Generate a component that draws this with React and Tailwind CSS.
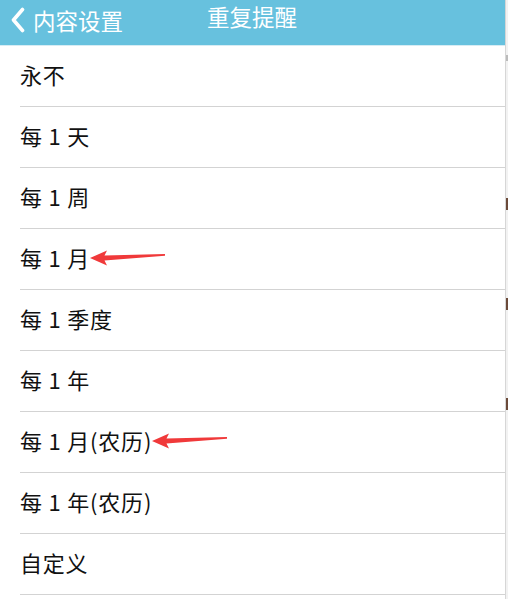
import React from "react";

const items = ["永不", "每 1 天", "每 1 周", "每 1 月", "每 1 季度", "每 1 年", "每 1 月(农历)", "每 1 年(农历)", "自定义"];

function Arrow() {
  return (
    <svg width="76" height="18" viewBox="0 0 76 18" className="ml-[0px] mt-[2px]">
      <path d="M0 9 L17 1.5 L14.5 6.5 L75 5 L75 6.8 L14.5 11.5 L17 16.5 Z" fill="#f0393a" />
    </svg>
  );
}

export default function App() {
  return (
    <div
      className="flex w-[508px] h-[599px] overflow-hidden bg-white"
      style={{ fontFamily: '"Noto Sans CJK SC", "Noto Sans", sans-serif' }}
    >
      <div className="flex flex-col w-[505px]">
        <div className="relative flex items-center h-[46px] bg-[#67c1de] border-b border-[#d6ecf4] text-white">
          <svg width="16" height="26" viewBox="0 0 16 26" className="ml-[10px] mb-[5px]">
            <path d="M12.5 2.5 L3.5 13 L12.5 23.5" fill="none" stroke="white" strokeWidth="3.6" strokeLinecap="round" strokeLinejoin="round" />
          </svg>
          <span className="ml-[7px] text-[22.5px] leading-none mb-[5px]">内容设置</span>
          <span className="absolute left-[207px] top-[5px] text-[22.5px] leading-none">重复提醒</span>
        </div>
        {items.map((t, i) => (
          <div key={i} className="pl-[20px]">
            <div className="flex items-center h-[61px] border-b border-[#d3d3d3] text-[22px] text-[#111] leading-none pb-[5px]">
              <span className="tracking-[0.8px]">{t}</span>
              {(i === 3 || i === 6) && <Arrow />}
            </div>
          </div>
        ))}
      </div>
      <div className="w-[1px] bg-[#d6d6d6]" />
      <div className="relative w-[2px] bg-[#f2f2f2]">
        <div className="absolute top-[55px] w-[2px] h-[6px] bg-[#bbbbbb]" />
        <div className="absolute top-[198px] w-[2px] h-[12px] bg-[#6b4a3a]" />
        <div className="absolute top-[298px] w-[2px] h-[12px] bg-[#6b4a3a]" />
        <div className="absolute top-[398px] w-[2px] h-[12px] bg-[#6b4a3a]" />
      </div>
    </div>
  );
}
